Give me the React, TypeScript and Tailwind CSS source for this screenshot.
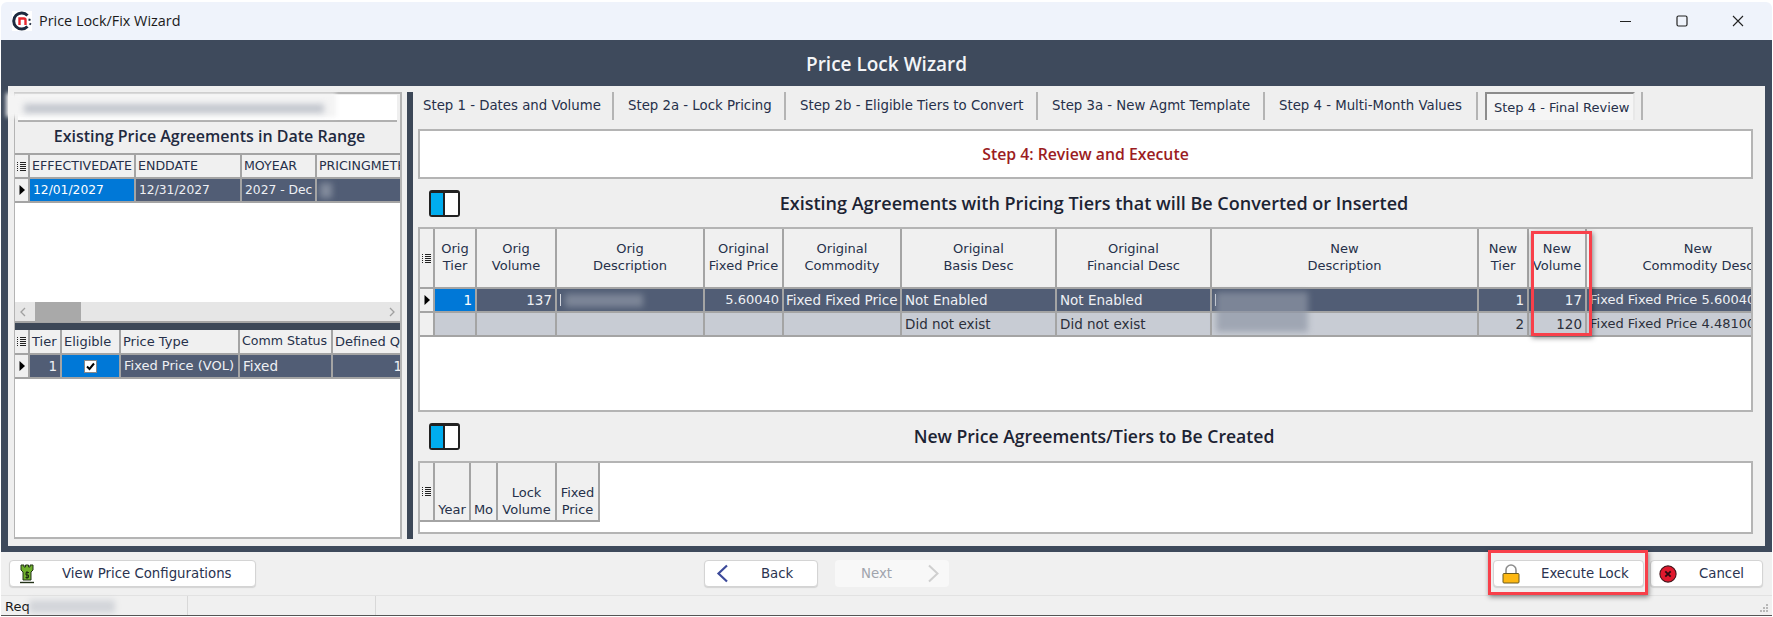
import React from "react";

const FONT = "font-['Open_Sans','Noto_Sans',sans-serif]";
const SMALL = "font-['DejaVu_Sans',sans-serif] text-[13px]";

function GridIcon() {
  return (
    <svg width="9" height="11" viewBox="0 0 9 11" className="shrink-0">
      <path d="M0 1.5h1M3 1.5h6M0 3.5h1M3 3.5h6M0 5.5h1M3 5.5h6M0 7.5h1M3 7.5h6M0 9.5h1M3 9.5h6" stroke="#222" strokeWidth="1" />
    </svg>
  );
}

function Arrow() {
  return (
    <svg width="8" height="12" viewBox="0 0 8 12">
      <path d="M1.5 1L7 6L1.5 11Z" fill="#000" />
    </svg>
  );
}

function Logo() {
  return (
    <svg width="20" height="20" viewBox="0 0 20 20" className="shrink-0">
      <rect width="20" height="20" fill="#fff" />
      <path d="M15.5 4.5A8 8 0 1 0 15.5 15.5" fill="none" stroke="#1d2a3f" strokeWidth="3" />
      <path d="M16.5 8.5l2 .5M17.5 12.5l1.5 1" stroke="#1d2a3f" strokeWidth="2" />
      <path d="M7.5 14V7.5H12Q13.5 7.5 13.5 9V14" fill="none" stroke="#e8262d" strokeWidth="2.4" />
    </svg>
  );
}

function ToggleIcon() {
  return (
    <div className="flex h-[27px] w-[31px] overflow-hidden rounded-[3px] border-2 border-t-[3px] border-[#222]">
      <div className="w-[14px] bg-[#00adef] border-r-2 border-[#222]" />
      <div className="flex-1 bg-white" />
    </div>
  );
}

function Blur({ className }: { className: string }) {
  return <div className={"absolute bg-[#8f97a6] blur-[3px] " + className} />;
}

const headCell =
  "flex bg-[#f0f0f0] border-r-2 border-b-2 border-[#a4a4a4] text-[#26304a] overflow-hidden whitespace-nowrap";
const selCell =
  "flex items-center h-full bg-[#515d75] border-r-2 border-b-2 border-[#a4a4a4] text-[#eef0f4] overflow-hidden whitespace-nowrap px-[3px] text-[13.5px]";
const blueCell =
  "flex items-center h-full bg-[#0078d7] border-r-2 border-b-2 border-[#a4a4a4] text-white overflow-hidden whitespace-nowrap px-[3px] text-[13.5px]";
const greyCell =
  "flex items-center h-full bg-[#c8ccd4] border-r-2 border-b-2 border-[#a4a4a4] text-[#2b2f3a] overflow-hidden whitespace-nowrap px-[3px] text-[13.5px]";

function CornerHead({ align = "items-center" }: { align?: string }) {
  return (
    <div className={headCell + " justify-center " + align}>
      <GridIcon />
    </div>
  );
}

function RowHead({ arrow }: { arrow?: boolean }) {
  return (
    <div className="flex h-full items-center justify-center bg-[#f0f0f0] border-r-2 border-b-2 border-[#a4a4a4]">
      {arrow && <Arrow />}
    </div>
  );
}

function H2({ a, b }: { a?: string; b: string }) {
  return (
    <div className={headCell + " flex-col items-center justify-center leading-[17px] pb-[2px]"}>
      {a && <span>{a}</span>}
      <span>{b}</span>
    </div>
  );
}

function H1({ t, size = "" }: { t: string; size?: string }) {
  return <div className={headCell + " items-center px-[2px] " + size}>{t}</div>;
}

function LeftPanel() {
  return (
    <div className={"flex w-[388px] flex-col border-2 border-l-[1px] border-[#b4b4b4] " + SMALL}>
      <div className="relative mx-[3px] mt-[1px] h-[27px] border-b-2 border-[#b0b0b0] bg-white">
        <div className="absolute left-[-12px] top-[-2px] h-[24px] w-[330px] bg-[#f4f4f4] blur-[2px]" />
        <Blur className="left-[6px] top-[9px] h-[9px] w-[300px] opacity-50" />
      </div>
      <div className={"flex h-[31px] items-center justify-center pb-[3px] pl-[4px] text-[16px] font-semibold text-[#1f2a40] " + FONT}>
        Existing Price Agreements in Date Range
      </div>
      <div className="border-t-2 border-[#a4a4a4] overflow-hidden">
        <div className="grid w-[440px] grid-cols-[15px_106px_106px_75px_137px] grid-rows-[24px_24px]">
          <CornerHead />
          <H1 t="EFFECTIVEDATE" size="text-[12.6px]" />
          <H1 t="ENDDATE" size="text-[12.6px]" />
          <H1 t="MOYEAR" size="text-[12.6px]" />
          <H1 t="PRICINGMETHOD" size="text-[12.6px]" />
          <RowHead arrow />
          <div className={blueCell + " !text-[12.3px]"}>12/01/2027</div>
          <div className={selCell + " !text-[12.3px]"}>12/31/2027</div>
          <div className={selCell + " !text-[12.3px]"}>2027 - Dec</div>
          <div className={selCell + " relative"}>
            <Blur className="left-[3px] top-[4px] h-[15px] w-[12px] opacity-80" />
          </div>
        </div>
      </div>
      <div className="h-[99px] bg-white" />
      <div className="flex h-[21px] items-center border-b-2 border-[#a4a4a4] bg-[#e6e6e6] pl-[3px] pr-[3px]">
        <svg width="10" height="12" viewBox="0 0 10 12"><path d="M7 2L3 6L7 10" fill="none" stroke="#a0a0a0" strokeWidth="1.3" /></svg>
        <div className="ml-[7px] h-[20px] w-[46px] bg-[#a9a9a9]" />
        <div className="flex-1" />
        <svg width="10" height="12" viewBox="0 0 10 12"><path d="M3 2L7 6L3 10" fill="none" stroke="#a0a0a0" strokeWidth="1.3" /></svg>
      </div>
      <div className="h-[7px] bg-[#3c4757]" />
      <div className="overflow-hidden">
        <div className="grid w-[440px] grid-cols-[15px_32px_59px_119px_93px_122px] grid-rows-[25px_24px]">
          <CornerHead />
          <H1 t="Tier" />
          <H1 t="Eligible" />
          <H1 t="Price Type" />
          <H1 t="Comm Status" size="text-[12.6px]" />
          <H1 t="Defined Qty" />
          <RowHead arrow />
          <div className={selCell + " justify-end"}>1</div>
          <div className={blueCell + " justify-center"}>
            <div className="flex h-[13px] w-[13px] items-center justify-center border border-[#888] bg-white">
              <svg width="11" height="11" viewBox="0 0 11 11"><path d="M2 5.5L4.5 8L9 2.5" fill="none" stroke="#000" strokeWidth="2" /></svg>
            </div>
          </div>
          <div className={selCell + " !text-[13px]"}>Fixed Price (VOL)</div>
          <div className={selCell}>Fixed</div>
          <div className={selCell + " justify-end"}><span className="mr-[48px]">1</span></div>
        </div>
      </div>
      <div className="flex-1 bg-white" />
    </div>
  );
}

const tabs = [
  { t: "Step 1 - Dates and Volume", w: "w-[196px] pl-[5px]" },
  { t: "Step 2a - Lock Pricing", w: "w-[172px] pl-[14px]" },
  { t: "Step 2b - Eligible Tiers to Convert", w: "w-[252px] pl-[14px]" },
  { t: "Step 3a - New Agmt Template", w: "w-[227px] pl-[14px]" },
  { t: "Step 4 - Multi-Month Values", w: "w-[213px] pl-[14px]" },
];

function Tabs() {
  return (
    <div className="flex h-[37px] font-['DejaVu_Sans',sans-serif] text-[13.3px] text-[#26304a]">
      {tabs.map((x) => (
        <div key={x.t} className={"flex h-[28px] items-center border-r-2 border-[#b4b4b4] whitespace-nowrap " + x.w}>
          {x.t}
        </div>
      ))}
      <div className="ml-[7px] flex h-[28px] w-[150px] items-center border-2 border-b-0 border-[#8c8c8c] border-r-[#e8e8e8] bg-[#f5f5f5] pl-[7px] pt-[2px] text-[13px] whitespace-nowrap">
        Step 4 - Final Review
      </div>
      <div className="ml-[6px] h-[28px] border-r-2 border-[#b4b4b4]" />
    </div>
  );
}

function SectionHead({ title, h }: { title: string; h: string }) {
  return (
    <div className={"relative flex items-center justify-center font-semibold text-[#1c2333] " + h}>
      <div className="absolute left-[11px] top-[11px]">
        <ToggleIcon />
      </div>
      <span className="pl-[5px]">{title}</span>
    </div>
  );
}

function MainTable() {
  return (
    <div className={"relative h-[185px] w-[1335px] overflow-hidden border-2 border-[#b4b4b4] bg-white " + SMALL}>
      <div className="grid w-[1400px] grid-cols-[15px_42px_80px_148px_79px_118px_155px_155px_267px_50px_58px_224px] grid-rows-[60px_24px_24px]">
        <CornerHead align="items-start pt-[24px]" />
        <H2 a="Orig" b="Tier" />
        <H2 a="Orig" b="Volume" />
        <H2 a="Orig" b="Description" />
        <H2 a="Original" b="Fixed Price" />
        <H2 a="Original" b="Commodity" />
        <H2 a="Original" b="Basis Desc" />
        <H2 a="Original" b="Financial Desc" />
        <H2 a="New" b="Description" />
        <H2 a="New" b="Tier" />
        <H2 a="New" b="Volume" />
        <H2 a="New" b="Commodity Desc" />

        <RowHead arrow />
        <div className={blueCell + " justify-end"}>1</div>
        <div className={selCell + " justify-end"}>137</div>
        <div className={selCell + " relative"}>
          <Blur className="left-[8px] top-[5px] h-[13px] w-[78px] opacity-70" />
          <span className="h-[12px] w-[1px] bg-[#d8dbe2]" />
        </div>
        <div className={selCell + " justify-end !text-[13px]"}>5.60040</div>
        <div className={selCell + " !px-[2px]"}>Fixed Fixed Price</div>
        <div className={selCell}>Not Enabled</div>
        <div className={selCell}>Not Enabled</div>
        <div className={selCell + " relative !overflow-visible"}>
          <span className="h-[12px] w-[1px] bg-[#d8dbe2]" />
          <div className="absolute left-[4px] top-[3px] z-10 h-[40px] w-[92px] bg-[#8f97a6] opacity-70 blur-[3px]" />
        </div>
        <div className={selCell + " justify-end"}>1</div>
        <div className={selCell + " justify-end"}>17</div>
        <div className={selCell + " !text-[13px]"}>Fixed Fixed Price 5.60040</div>

        <RowHead />
        <div className={greyCell} />
        <div className={greyCell} />
        <div className={greyCell} />
        <div className={greyCell} />
        <div className={greyCell} />
        <div className={greyCell}>Did not exist</div>
        <div className={greyCell}>Did not exist</div>
        <div className={greyCell} />
        <div className={greyCell + " justify-end"}>2</div>
        <div className={greyCell + " justify-end"}>120</div>
        <div className={greyCell + " !text-[13px]"}>Fixed Fixed Price 4.48100</div>
      </div>
      <div className="absolute left-[1111px] top-[2px] h-[105px] w-[61px] border-[3px] border-[#f8404a] shadow-[1px_2px_5px_rgba(0,0,0,0.45)]" />
    </div>
  );
}

function SecondTable() {
  return (
    <div className={"h-[73px] w-[1335px] border-2 border-[#b4b4b4] bg-white " + SMALL}>
      <div className="grid w-fit grid-cols-[15px_36px_27px_59px_43px] grid-rows-[59px]">
        <CornerHead align="items-start pt-[23px]" />
        <div className={headCell + " items-end justify-center pb-[2px] leading-[17px]"}>Year</div>
        <div className={headCell + " items-end justify-center pb-[2px] leading-[17px]"}>Mo</div>
        <div className={headCell + " flex-col items-center justify-end pb-[2px] leading-[17px]"}>
          <span>Lock</span>
          <span>Volume</span>
        </div>
        <div className={headCell + " flex-col items-center justify-end pb-[2px] leading-[17px]"}>
          <span>Fixed</span>
          <span>Price</span>
        </div>
      </div>
    </div>
  );
}

function Btn({ w, icon, text, textPl }: { w: string; icon: React.ReactNode; text: string; textPl: string }) {
  return (
    <div className={"flex h-[27px] items-center rounded-[4px] border border-[#d4d4d4] bg-white font-['DejaVu_Sans',sans-serif] text-[#2a3350] shadow-[0_1px_1px_rgba(0,0,0,0.12)] " + w}>
      <div className="ml-[8px] flex w-[18px] justify-center">{icon}</div>
      <span className={textPl + " whitespace-nowrap"}>{text}</span>
    </div>
  );
}

const towerIcon = (
  <svg width="16" height="20" viewBox="0 0 16 20">
    <path d="M2 1H5V3H6.5V1H9.5V3H11V1H14V6L12 8V16H4V8L2 6Z" fill="#6fb02c" stroke="#24331a" strokeWidth="1" />
    <path d="M10 8.5H7V11H9.5V13.5H6.5M8 7V15" fill="none" stroke="#1d2a12" strokeWidth="1" />
    <path d="M1 18.5H15" stroke="#24331a" strokeWidth="1.4" />
  </svg>
);

const backIcon = (
  <svg width="13" height="19" viewBox="0 0 13 19"><path d="M11 1.5L2.5 9.5L11 17.5" fill="none" stroke="#3c4a9a" strokeWidth="2.2" /></svg>
);
const nextIcon = (
  <svg width="13" height="19" viewBox="0 0 13 19"><path d="M2 1.5L10.5 9.5L2 17.5" fill="none" stroke="#cfcfcf" strokeWidth="2" /></svg>
);
const lockIcon = (
  <svg width="18" height="20" viewBox="0 0 18 20">
    <path d="M4 10V6A5 5 0 0 1 14 6V10" fill="none" stroke="#8d8d8d" strokeWidth="1.6" />
    <rect x="1" y="9.5" width="16" height="9.5" fill="#fdb813" stroke="#6a5a20" strokeWidth="1" rx="1" />
  </svg>
);
const cancelIcon = (
  <svg width="20" height="20" viewBox="0 0 20 20">
    <circle cx="10" cy="10" r="9" fill="#e0182d" stroke="#40141a" strokeWidth="1.2" />
    <path d="M7 7L13 13M13 7L7 13" stroke="#2a0a10" strokeWidth="2" />
  </svg>
);

export default function App() {
  return (
    <div className={"relative h-[617px] w-[1773px] overflow-hidden bg-white " + FONT}>
      <div className="ml-[1px] mt-[2px] flex h-[614px] w-[1771px] flex-col overflow-hidden rounded-t-[6px] border-b border-[#555]">
        {/* Title bar */}
        <div className="flex h-[38px] shrink-0 items-center bg-[#eff3fb] pl-[11px] text-[14.4px] text-[#1a1a1a]">
          <Logo />
          <span className="ml-[7px]">Price Lock/Fix Wizard</span>
          <div className="flex-1" />
          <svg width="11" height="11" viewBox="0 0 11 11"><path d="M0 5.5H11" stroke="#222" /></svg>
          <svg width="12" height="12" viewBox="0 0 12 12" className="ml-[45px]"><rect x="1" y="1" width="10" height="10" rx="1.5" fill="none" stroke="#222" strokeWidth="1.2" /></svg>
          <svg width="12" height="12" viewBox="0 0 12 12" className="ml-[44px] mr-[28px]"><path d="M1 1L11 11M11 1L1 11" stroke="#222" strokeWidth="1.1" /></svg>
        </div>

        {/* Dark frame */}
        <div className="flex h-[512px] shrink-0 flex-col bg-[#3e4a5c] pl-[7px] pr-[7px]">
          <div className="flex h-[46px] shrink-0 items-center justify-center pt-[2px] text-[19px] font-semibold text-[#f4f5f7]">
            Price Lock Wizard
          </div>
          <div className="flex h-[460px] bg-[#efefef] pt-[6px] pb-[7px]">
            <div className="ml-[6px] flex w-[393px]">
              <LeftPanel />
            </div>
            <div className="h-full w-[6px] bg-[#3c4757]" />
            <div className="flex flex-1 flex-col pl-[5px]">
              <Tabs />
              <div className="flex h-[50px] w-[1335px] items-center justify-center border-2 border-[#b4b4b4] bg-white pt-[1px] text-[15.8px] font-semibold text-[#9b1c22]">
                Step 4: Review and Execute
              </div>
              <div className="text-[18px]">
                <SectionHead h="h-[48px]" title="Existing Agreements with Pricing Tiers that will Be Converted or Inserted" />
              </div>
              <MainTable />
              <div className="text-[17.6px]">
                <SectionHead h="h-[49px]" title="New Price Agreements/Tiers to Be Created" />
              </div>
              <SecondTable />
            </div>
          </div>
        </div>

        {/* Footer */}
        <div className="flex h-[43px] shrink-0 items-center bg-[#f0f0f0] pl-[8px] pr-[9px] text-[13.3px]">
          <Btn w="w-[247px]" icon={towerIcon} text="View Price Configurations" textPl="ml-[26px]" />
          <div className="flex-1" />
          <Btn w="w-[114px]" icon={backIcon} text="Back" textPl="ml-[30px]" />
          <div className="w-[17px]" />
          <div className="flex h-[27px] w-[114px] items-center rounded-[4px] bg-[#f8f8f8] pl-[26px] pr-[9px] font-['DejaVu_Sans',sans-serif] text-[#a0a4ad]">
            <span>Next</span>
            <div className="flex-1" />
            {nextIcon}
          </div>
          <div className="w-[544px]" />
          <Btn w="w-[151px]" icon={lockIcon} text="Execute Lock" textPl="ml-[21px]" />
          <div className="w-[6px]" />
          <Btn w="w-[113px]" icon={cancelIcon} text="Cancel" textPl="ml-[22px]" />
        </div>

        {/* Status */}
        <div className={"flex h-[20px] shrink-0 items-stretch border-t border-[#e2e2e2] bg-[#f0f0f0] text-[#1a1a1a] " + SMALL}>
          <div className="relative w-[187px] border-r border-[#d8d8d8] pl-[4px] leading-[22px]">
            Req
            <Blur className="left-[28px] top-[4px] h-[13px] w-[86px] opacity-30" />
          </div>
          <div className="w-[188px] border-r border-[#d8d8d8]" />
          <div className="flex flex-1 items-end justify-end pb-[1px] pr-[3px]">
            <svg width="10" height="10" viewBox="0 0 10 10" fill="#b8b8b8">
              <rect x="7" y="0" width="2" height="2" /><rect x="4" y="3" width="2" height="2" /><rect x="7" y="3" width="2" height="2" />
              <rect x="1" y="6" width="2" height="2" /><rect x="4" y="6" width="2" height="2" /><rect x="7" y="6" width="2" height="2" />
            </svg>
          </div>
        </div>
      </div>

      <div className="absolute left-[1488px] top-[550px] h-[45px] w-[160px] border-[3px] border-[#f8404a] shadow-[1px_2px_5px_rgba(0,0,0,0.45)]" />
    </div>
  );
}
